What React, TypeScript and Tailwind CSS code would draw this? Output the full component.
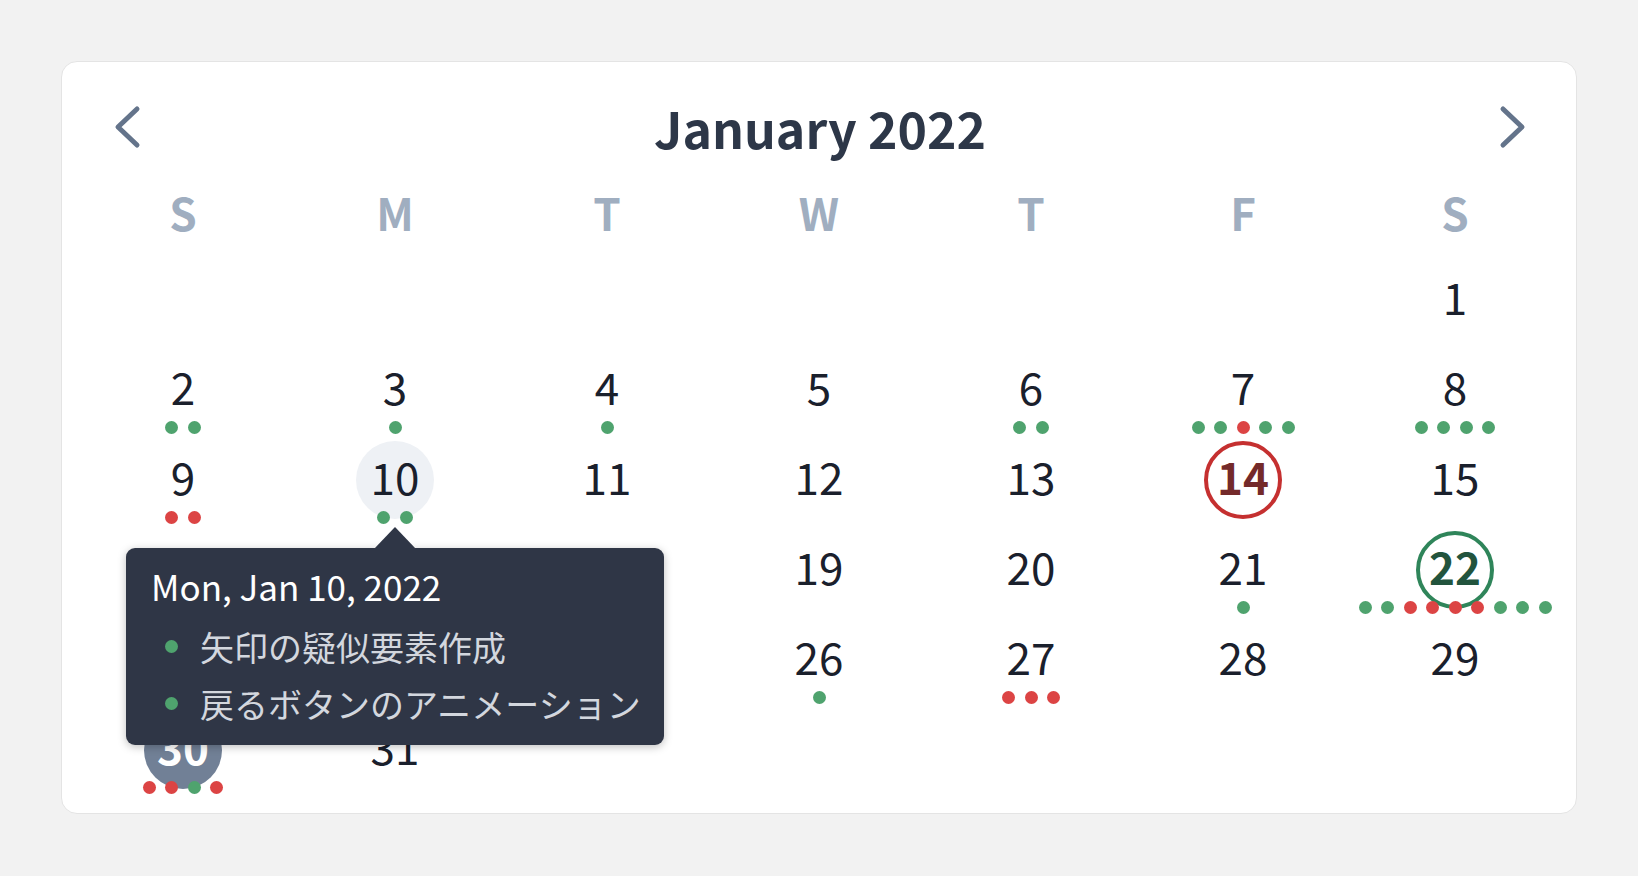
import React from "react";

type Dot = "g" | "r";
type Variant = "none" | "hover" | "red" | "green" | "filled";

interface Day {
  n: number | null;
  dots?: Dot[];
  v?: Variant;
  tooltip?: boolean;
}

const rows: Day[][] = [
  [{ n: null }, { n: null }, { n: null }, { n: null }, { n: null }, { n: null }, { n: 1 }],
  [
    { n: 2, dots: ["g", "g"] },
    { n: 3, dots: ["g"] },
    { n: 4, dots: ["g"] },
    { n: 5 },
    { n: 6, dots: ["g", "g"] },
    { n: 7, dots: ["g", "g", "r", "g", "g"] },
    { n: 8, dots: ["g", "g", "g", "g"] },
  ],
  [
    { n: 9, dots: ["r", "r"] },
    { n: 10, dots: ["g", "g"], v: "hover", tooltip: true },
    { n: 11 },
    { n: 12 },
    { n: 13 },
    { n: 14, v: "red" },
    { n: 15 },
  ],
  [
    { n: 16 },
    { n: 17 },
    { n: 18 },
    { n: 19 },
    { n: 20 },
    { n: 21, dots: ["g"] },
    { n: 22, v: "green", dots: ["g", "g", "r", "r", "r", "r", "g", "g", "g"] },
  ],
  [
    { n: 23 },
    { n: 24 },
    { n: 25 },
    { n: 26, dots: ["g"] },
    { n: 27, dots: ["r", "r", "r"] },
    { n: 28 },
    { n: 29 },
  ],
  [
    { n: 30, v: "filled", dots: ["r", "r", "g", "r"] },
    { n: 31 },
    { n: null },
    { n: null },
    { n: null },
    { n: null },
    { n: null },
  ],
];

const circleClass: Record<Variant, string> = {
  none: "text-[#1a202c]",
  hover: "bg-[#eef1f5] text-[#1a202c]",
  red: "border-[4px] border-[#c53030] text-[#742a2a] font-bold",
  green: "border-[4px] border-[#2f855a] text-[#22543d] font-bold",
  filled: "bg-[#718096] text-white font-bold",
};

function Tooltip() {
  return (
    <div className="absolute top-[107px] left-1/2 -translate-x-1/2 w-[538px] z-20 rounded-[9px] bg-[#2f3646] shadow-[0_2px_8px_rgba(0,0,0,0.25)] pl-[25px] pr-[20px] pt-[16px] pb-[13px]">
      <div className="absolute -top-[21px] left-1/2 -translate-x-1/2 w-0 h-0 border-l-[21px] border-r-[21px] border-b-[22px] border-l-transparent border-r-transparent border-b-[#2f3646]" />
      <div className="text-[35px] leading-[44px] text-white whitespace-nowrap">Mon, Jan 10, 2022</div>
      <div className="mt-[10px]">
        <div className="flex items-center h-[57px] whitespace-nowrap">
          <span className="w-[13px] h-[13px] rounded-full bg-[#4fa36e] ml-[14px] mr-[22px] shrink-0" />
          <span className="text-[34px] leading-[57px] text-[#d3d7de]">矢印の疑似要素作成</span>
        </div>
        <div className="flex items-center h-[57px] whitespace-nowrap">
          <span className="w-[13px] h-[13px] rounded-full bg-[#4fa36e] ml-[14px] mr-[22px] shrink-0" />
          <span className="text-[34px] leading-[57px] text-[#d3d7de]">戻るボタンのアニメーション</span>
        </div>
      </div>
    </div>
  );
}

function Cell({ d }: { d: Day }) {
  if (d.n === null) return <div className="h-[90px]" />;
  const v = d.v ?? "none";
  return (
    <div className="relative flex flex-col items-center h-[90px]">
      <div
        className={`w-[78px] h-[78px] rounded-full flex items-center justify-center pb-[8px] text-[44px] leading-none ${circleClass[v]}`}
      >
        {d.n}
      </div>
      {d.dots && (
        <div className="flex gap-[9.5px] -mt-[8px] relative z-10">
          {d.dots.map((c, i) => (
            <span
              key={i}
              className={`w-[13px] h-[13px] rounded-full ${c === "g" ? "bg-[#4fa36e]" : "bg-[#dc4444]"}`}
            />
          ))}
        </div>
      )}
      {d.tooltip && <Tooltip />}
    </div>
  );
}

export default function App() {
  const weekdays = ["S", "M", "T", "W", "T", "F", "S"];
  return (
    <div
      className="min-h-screen bg-[#f2f2f2] pt-[61px] pl-[61px]"
      style={{ fontFamily: '"Noto Sans CJK JP", "Noto Sans", sans-serif' }}
    >
      <div className="w-[1516px] h-[753px] bg-white border border-[#e4e4e4] rounded-[16px] pt-[25px] px-[15px] overflow-hidden">
        <div className="flex items-center justify-between h-[80px] pl-[36px] pr-[34px]">
          <button className="w-[28px] h-[44px] flex items-center justify-center -mt-[1px]">
            <svg width="28" height="44" viewBox="0 0 28 44" fill="none">
              <path d="M24 4 L5 22 L24 40" stroke="#64748b" strokeWidth="5" strokeLinecap="round" strokeLinejoin="round" />
            </svg>
          </button>
          <h1 className="text-[50px] leading-none font-semibold text-[#2d3748]">January 2022</h1>
          <button className="w-[28px] h-[44px] flex items-center justify-center -mt-[1px]">
            <svg width="28" height="44" viewBox="0 0 28 44" fill="none">
              <path d="M4 4 L23 22 L4 40" stroke="#64748b" strokeWidth="5" strokeLinecap="round" strokeLinejoin="round" />
            </svg>
          </button>
        </div>
        <div className="grid grid-cols-7 h-[94px] items-center pb-[5px]">
          {weekdays.map((w, i) => (
            <div key={i} className="text-center text-[44px] leading-none font-semibold text-[#a0aec0]">
              {w}
            </div>
          ))}
        </div>
        <div className="grid grid-cols-7">
          {rows.flat().map((d, i) => (
            <Cell key={i} d={d} />
          ))}
        </div>
      </div>
    </div>
  );
}
